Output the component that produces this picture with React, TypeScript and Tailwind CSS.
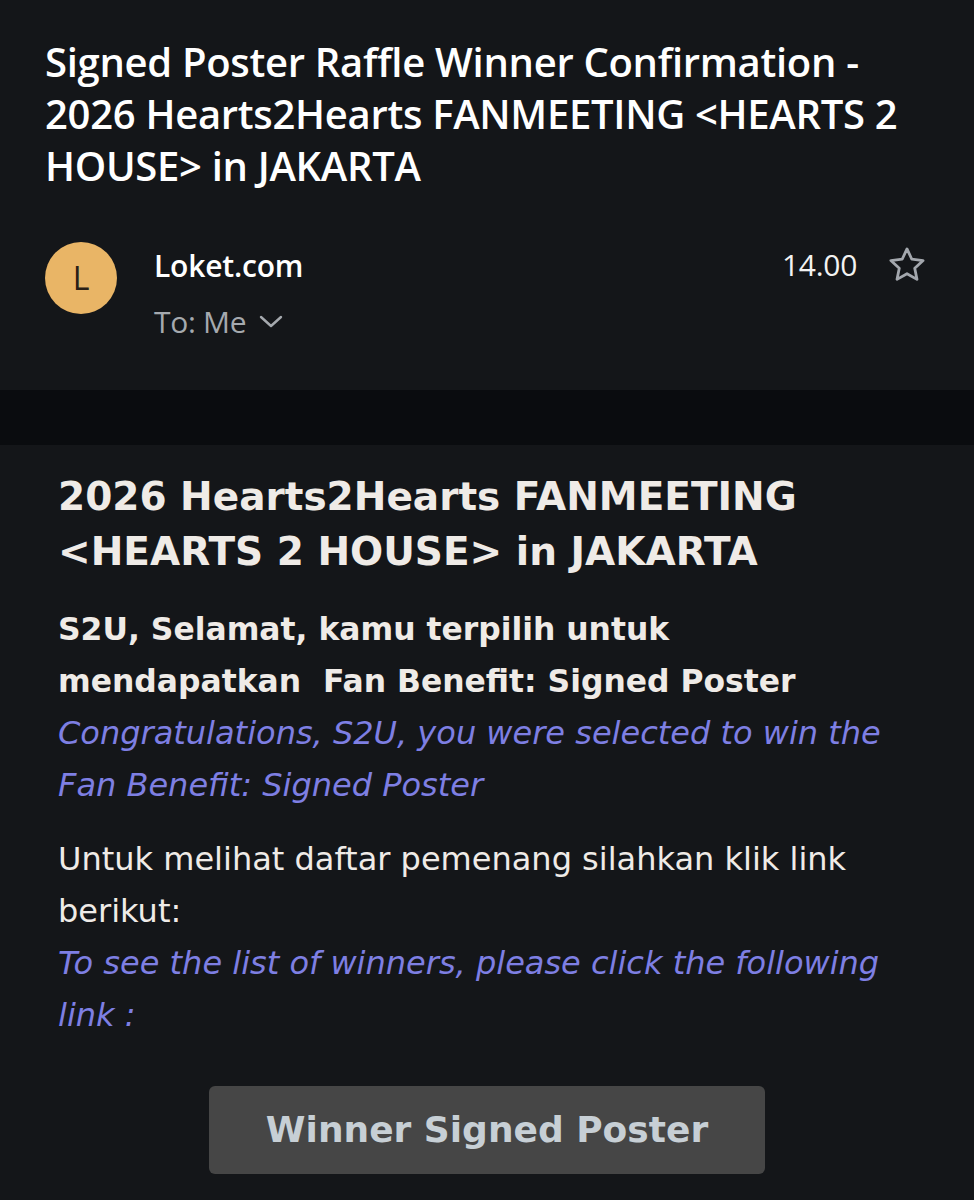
import React from "react";

function Star() {
  return (
    <svg width="44" height="42" viewBox="0 0 24 24" fill="none" stroke="#a3a7ad" strokeWidth="1.6" strokeLinejoin="round">
      <path d="M12 2.8l2.75 5.9 6.45.75-4.78 4.38 1.28 6.37L12 17.02 6.3 20.2l1.28-6.37L2.8 9.45l6.45-.75L12 2.8z" />
    </svg>
  );
}

function Chevron() {
  return (
    <svg width="26" height="18" viewBox="0 0 26 18" fill="none" stroke="#a5a9ae" strokeWidth="2.4" strokeLinecap="round" strokeLinejoin="round">
      <path d="M3 4l10 9 10-9" />
    </svg>
  );
}

export default function App() {
  const sans = { fontFamily: '"Open Sans", "Noto Sans", sans-serif' };
  const dv = { fontFamily: '"DejaVu Sans", Verdana, sans-serif' };
  return (
    <div className="w-[974px] h-[1200px] bg-[#141619] overflow-hidden">
      <div className="h-[390px] px-[45px] pt-[36px]" style={sans}>
        <h1 className="text-[40px] leading-[52px] font-semibold text-white tracking-[-0.3px] w-[880px]">
          Signed Poster Raffle Winner Confirmation - 2026 Hearts2Hearts FANMEETING &lt;HEARTS 2 HOUSE&gt; in JAKARTA
        </h1>
        <div className="flex mt-[50px]">
          <div className="w-[72px] h-[72px] rounded-full bg-[#e9b566] flex items-center justify-center text-[#2a2016] text-[32px] shrink-0">
            L
          </div>
          <div className="ml-[37px] flex-1">
            <div className="flex items-center justify-between">
              <div className="text-[30px] font-semibold text-white tracking-[-0.2px] leading-[40px] mt-[2px]">Loket.com</div>
              <div className="flex items-center gap-[28px] mr-[0px]">
                <span className="text-[30px] text-[#f2f2f2] tracking-[-0.3px]">14.00</span>
                <Star />
              </div>
            </div>
            <div className="flex items-center gap-[12px] mt-[15px]">
              <span className="text-[30px] leading-[40px] text-[#a5a9ae] tracking-[-0.3px]">To: Me</span>
              <Chevron />
            </div>
          </div>
        </div>
      </div>
      <div className="h-[55px] bg-[#0a0c0f]" />
      <div className="pl-[58px] pt-[24px]" style={dv}>
        <h2 className="text-[39px] leading-[55px] font-bold text-[#efebe7]">
          2026 Hearts2Hearts FANMEETING<br />&lt;HEARTS 2 HOUSE&gt; in JAKARTA
        </h2>
        <p className="mt-[24px] text-[31.4px] leading-[52px] font-bold text-[#efebe7] w-[780px]">
          S2U, Selamat, kamu terpilih untuk mendapatkan&nbsp; Fan Benefit: Signed Poster
        </p>
        <p className="text-[32px] leading-[52px] italic text-[#7e7fe3] w-[860px]">
          Congratulations, S2U, you were selected to win the Fan Benefit: Signed Poster
        </p>
        <p className="mt-[22px] text-[32px] leading-[52px] text-[#efebe7] w-[860px]">
          Untuk melihat daftar pemenang silahkan klik link berikut:
        </p>
        <p className="text-[32px] leading-[52px] italic text-[#7e7fe3] w-[860px]">
          To see the list of winners, please click the following link :
        </p>
      </div>
      <div className="flex justify-center mt-[45px]" style={dv}>
        <div className="w-[556px] h-[88px] rounded-[6px] bg-[#464646] flex items-center justify-center text-[36px] font-bold text-[#c7cfd5]">
          Winner Signed Poster
        </div>
      </div>
    </div>
  );
}
